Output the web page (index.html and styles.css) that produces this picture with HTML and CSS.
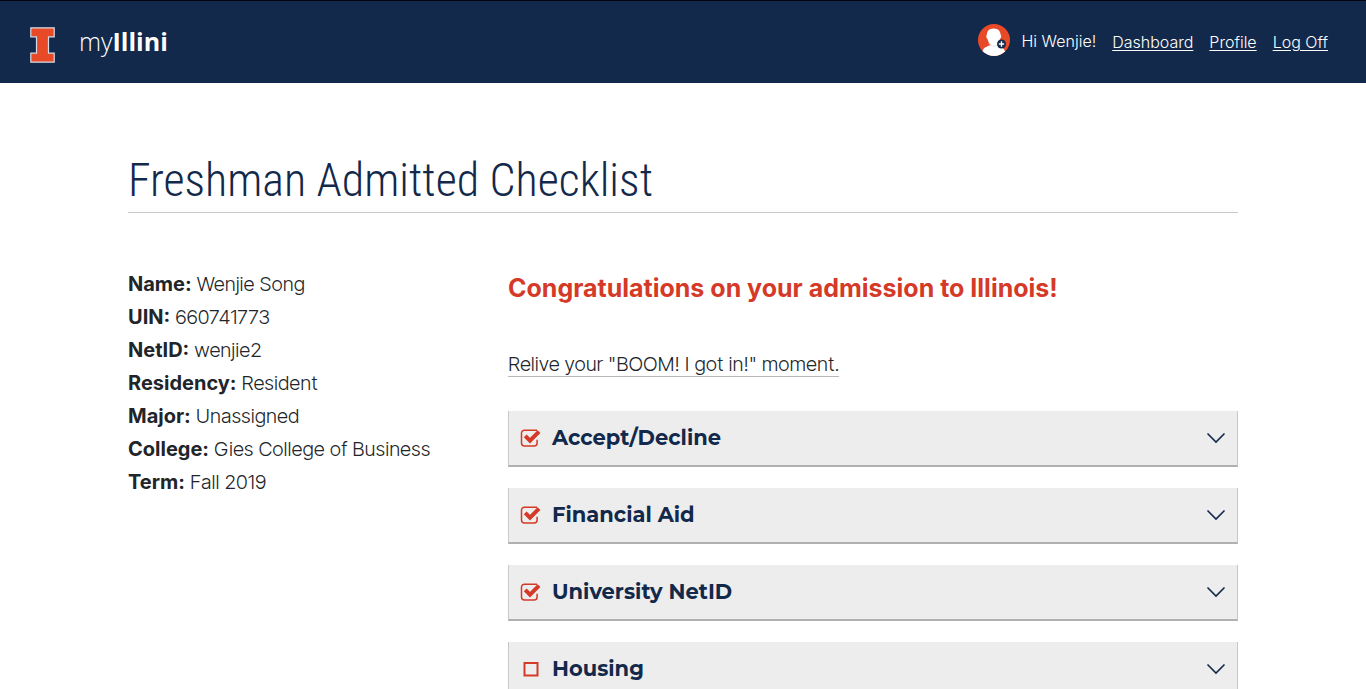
FILE: index.html
```html
<!DOCTYPE html>
<html lang="en">
<head>
<meta charset="utf-8">
<meta name="viewport" content="width=device-width, initial-scale=1">
<title>Freshman Admitted Checklist | myIllini</title>
<link rel="stylesheet" href="styles.css">
</head>
<body>
<svg class="sprite" aria-hidden="true">
  <symbol id="checked" viewBox="0 0 22 20">
    <path d="M17 2.2H4.500a3 3 0 0 0-3 3v9.700a3 3 0 0 0 3 3h9.600a3 3 0 0 0 3-3v-3.200" fill="none" stroke="currentColor" stroke-width="1.500"/>
    <path d="M5.200 7.800l4.800 4.800L19 3.600" fill="none" stroke="currentColor" stroke-width="4"/>
  </symbol>
  <symbol id="unchecked" viewBox="0 0 22 20">
    <path d="M4.500 4H17.500V16.500H4.500z" fill="none" stroke="currentColor" stroke-width="2"/>
  </symbol>
  <symbol id="chevron" viewBox="0 0 20 12">
    <path d="M1.500 1.500L10 10l8.500-8.500" fill="none" stroke="currentColor" stroke-width="1.600"/>
  </symbol>
</svg>
<header class="site-header">
  <a class="brand" href="#">
    <svg class="brand-mark" viewBox="0 0 25 36" aria-hidden="true">
      <path d="M.8.800H24.200V9.800H18.500V26.200H24.200V35.200H.8V26.200H6.500V9.800H.8z" fill="#e84a27" stroke="#d5dbe6" stroke-width="1.200"/>
    </svg>
    <span class="brand-name">my<strong>Illini</strong></span>
  </a>
  <nav class="user-nav" aria-label="Account">
    <span class="greeting">
      <svg class="avatar" viewBox="0 0 32 32" aria-hidden="true">
        <defs><clipPath id="disc"><circle cx="16" cy="16" r="16"/></clipPath></defs>
        <g clip-path="url(#disc)">
          <path d="M0 0H32V32H0z" fill="#e84a27"/>
          <path d="M4 32C3.500 25 6 23.200 13 21h6c5 2 9 3.500 8.500 11z" fill="#fff"/>
          <path d="M15.500 4.500c4.700 0 7 2.800 7.200 6.500.9.500.5 3-.7 4-1 4.500-3.500 7.200-6 7.200s-5.500-2.700-6.500-7.200c-1.300-1-1.600-3.500-.7-4 .2-3.700 2-6.500 6.700-6.500z" fill="#fff"/>
          <path d="M10.500 19.500q5 4.500 10 1" fill="none" stroke="#ddd" stroke-width=".7"/>
        </g>
        <circle cx="23.500" cy="20" r="4.500" fill="#13294b"/>
        <path d="M20.800 20h5.400M23.500 17.300v5.400" stroke="#fff" stroke-width="1.400"/>
      </svg>
      Hi Wenjie!
    </span>
    <a href="#">Dashboard</a>
    <a href="#">Profile</a>
    <a href="#">Log Off</a>
  </nav>
</header>
<main class="page">
  <h1 class="page-title">Freshman Admitted Checklist</h1>
  <div class="columns">
    <aside class="student" aria-label="Student information">
      <div><strong>Name:</strong> Wenjie Song</div>
      <div><strong>UIN:</strong> 660741773</div>
      <div><strong>NetID:</strong> wenjie2</div>
      <div><strong>Residency:</strong> Resident</div>
      <div><strong>Major:</strong> Unassigned</div>
      <div><strong>College:</strong> Gies College of Business</div>
      <div><strong>Term:</strong> Fall 2019</div>
    </aside>
    <section class="checklist">
      <h2 class="congrats">Congratulations on your admission to Illinois!</h2>
      <p class="relive"><a href="#">Relive your "BOOM! I got in!" moment.</a></p>
      <div class="items">
        <button class="item" type="button" aria-expanded="false">
          <svg class="status" role="img" aria-label="Complete"><use href="#checked"/></svg>
          <span class="item-name">Accept/Decline</span>
          <svg class="chevron" aria-hidden="true"><use href="#chevron"/></svg>
        </button>
        <button class="item" type="button" aria-expanded="false">
          <svg class="status" role="img" aria-label="Complete"><use href="#checked"/></svg>
          <span class="item-name">Financial Aid</span>
          <svg class="chevron" aria-hidden="true"><use href="#chevron"/></svg>
        </button>
        <button class="item" type="button" aria-expanded="false">
          <svg class="status" role="img" aria-label="Complete"><use href="#checked"/></svg>
          <span class="item-name">University NetID</span>
          <svg class="chevron" aria-hidden="true"><use href="#chevron"/></svg>
        </button>
        <button class="item" type="button" aria-expanded="false">
          <svg class="status" role="img" aria-label="Incomplete"><use href="#unchecked"/></svg>
          <span class="item-name">Housing</span>
          <svg class="chevron" aria-hidden="true"><use href="#chevron"/></svg>
        </button>
      </div>
    </section>
  </div>
</main>
</body>
</html>
```
FILE: styles.css
```css
* { box-sizing: border-box; }
html { scrollbar-width: none; }
body {
  margin: 0;
  background: #fff;
  color: #212529;
  font: 300 20px/33px "Inter Tight", Inter, Roboto, sans-serif;
}
.sprite { display: none; }
.site-header {
  display: flex;
  justify-content: space-between;
  padding: 23px 38px 20px 30px;
  border-top: 1px solid #02040f;
  background: #13294b;
  color: #fff;
}
.brand {
  display: flex;
  gap: 24px;
  color: inherit;
  text-decoration: none;
}
.brand-mark { width: 25px; height: 36px; margin-top: 3px; }
.brand-name {
  font: 300 25px/34px "Open Sans", sans-serif;
}
.brand-name strong { font-weight: 700; }
.user-nav {
  display: flex;
  align-items: flex-start;
  gap: 16px;
  font-family: Inter, sans-serif;
  font-size: 16px;
  line-height: 36px;
}
.greeting { display: flex; gap: 12px; line-height: 34px; }
.avatar { width: 32px; height: 32px; }
.user-nav a { color: inherit; text-underline-offset: 2px; }
.page {
  max-width: 1110px;
  margin: 0 auto;
  padding: 67px 0 20px;
}
.page-title {
  margin: 0 0 55px;
  padding-bottom: 1px;
  border-bottom: 1px solid #c8c8c8;
  color: #13294b;
  font: 300 46px/61px "Roboto Condensed", "Liberation Sans Narrow", Roboto, sans-serif;
}
.columns {
  display: grid;
  grid-template-columns: 35fr 73fr;
  gap: 30px;
}
.student strong { font-family: Inter, sans-serif; font-weight: 700; }
.congrats {
  margin: 4px 0 43px;
  color: #d53927;
  font-family: Inter, sans-serif;
  font-size: 25px;
  font-weight: 700;
  line-height: 33px;
}
.relive { margin: 0 0 30px; }
.relive a {
  border-bottom: 1px solid #b8b8b8;
  color: inherit;
  text-decoration: none;
}
.items { display: grid; gap: 21px; }
.item {
  display: flex;
  align-items: center;
  width: 100%;
  gap: 10px;
  padding: 12px 11px;
  border: 0 solid #c8c8c8;
  border-width: 0 1px 2px;
  border-bottom-color: #b0b0b0;
  background: #ededed;
  color: #13294b;
  font: 700 21px/30px Montserrat, Inter, sans-serif;
  text-align: left;
}
.item-name { flex: 1; }
.status { width: 22px; height: 20px; color: #d53927; }
.chevron { width: 20px; height: 12px; }
```
